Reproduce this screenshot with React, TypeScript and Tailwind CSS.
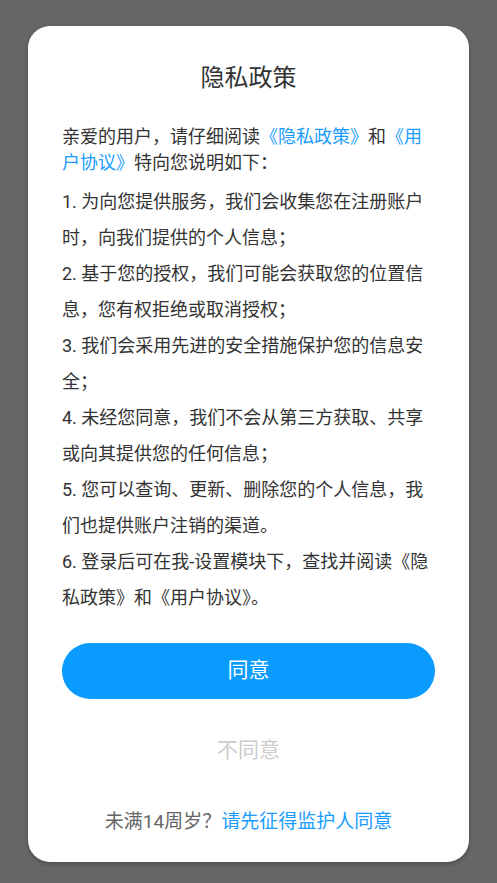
const items = [
  "1. 为向您提供服务，我们会收集您在注册账户时，向我们提供的个人信息；",
  "2. 基于您的授权，我们可能会获取您的位置信息，您有权拒绝或取消授权；",
  "3. 我们会采用先进的安全措施保护您的信息安全；",
  "4. 未经您同意，我们不会从第三方获取、共享或向其提供您的任何信息；",
  "5. 您可以查询、更新、删除您的个人信息，我们也提供账户注销的渠道。",
  "6. 登录后可在我-设置模块下，查找并阅读《隐私政策》和《用户协议》。",
];

export default function App() {
  return (
    <div
      className="h-[883px] w-full bg-[#666666] px-[28px] pt-[26px]"
      style={{ fontFamily: 'Roboto, "Noto Sans CJK SC", sans-serif' }}
    >
      <div className="flex h-[836px] flex-col rounded-[22px] bg-white px-[34px] pt-[36px] shadow-[0_2px_4px_rgba(0,0,0,0.25)]">
        <h1 className="text-center text-[24px] leading-[32px] text-[#333]">隐私政策</h1>

        <p className="mt-[30px] text-[18px] leading-[26px] text-[#333]">
          亲爱的用户，请仔细阅读
          <span className="text-[#1a9cff]">《隐私政策》</span>和
          <span className="text-[#1a9cff]">《用户协议》</span>特向您说明如下：
        </p>

        <div className="mt-[8px] flex flex-col">
          {items.map((t) => (
            <p key={t} className="text-[18px] leading-[36px] text-[#333]">
              {t}
            </p>
          ))}
        </div>

        <button className="mt-[27px] h-[56px] w-full rounded-full bg-[#0a9bff] text-[21px] text-white">
          同意
        </button>

        <button className="mt-[36px] text-[21px] leading-[30px] text-[#cccccc]">不同意</button>

        <p className="mt-[43px] text-center text-[19px] leading-[28px] text-[#666]">
          未满14周岁？<span className="text-[#1a9cff]">请先征得监护人同意</span>
        </p>
      </div>
    </div>
  );
}
